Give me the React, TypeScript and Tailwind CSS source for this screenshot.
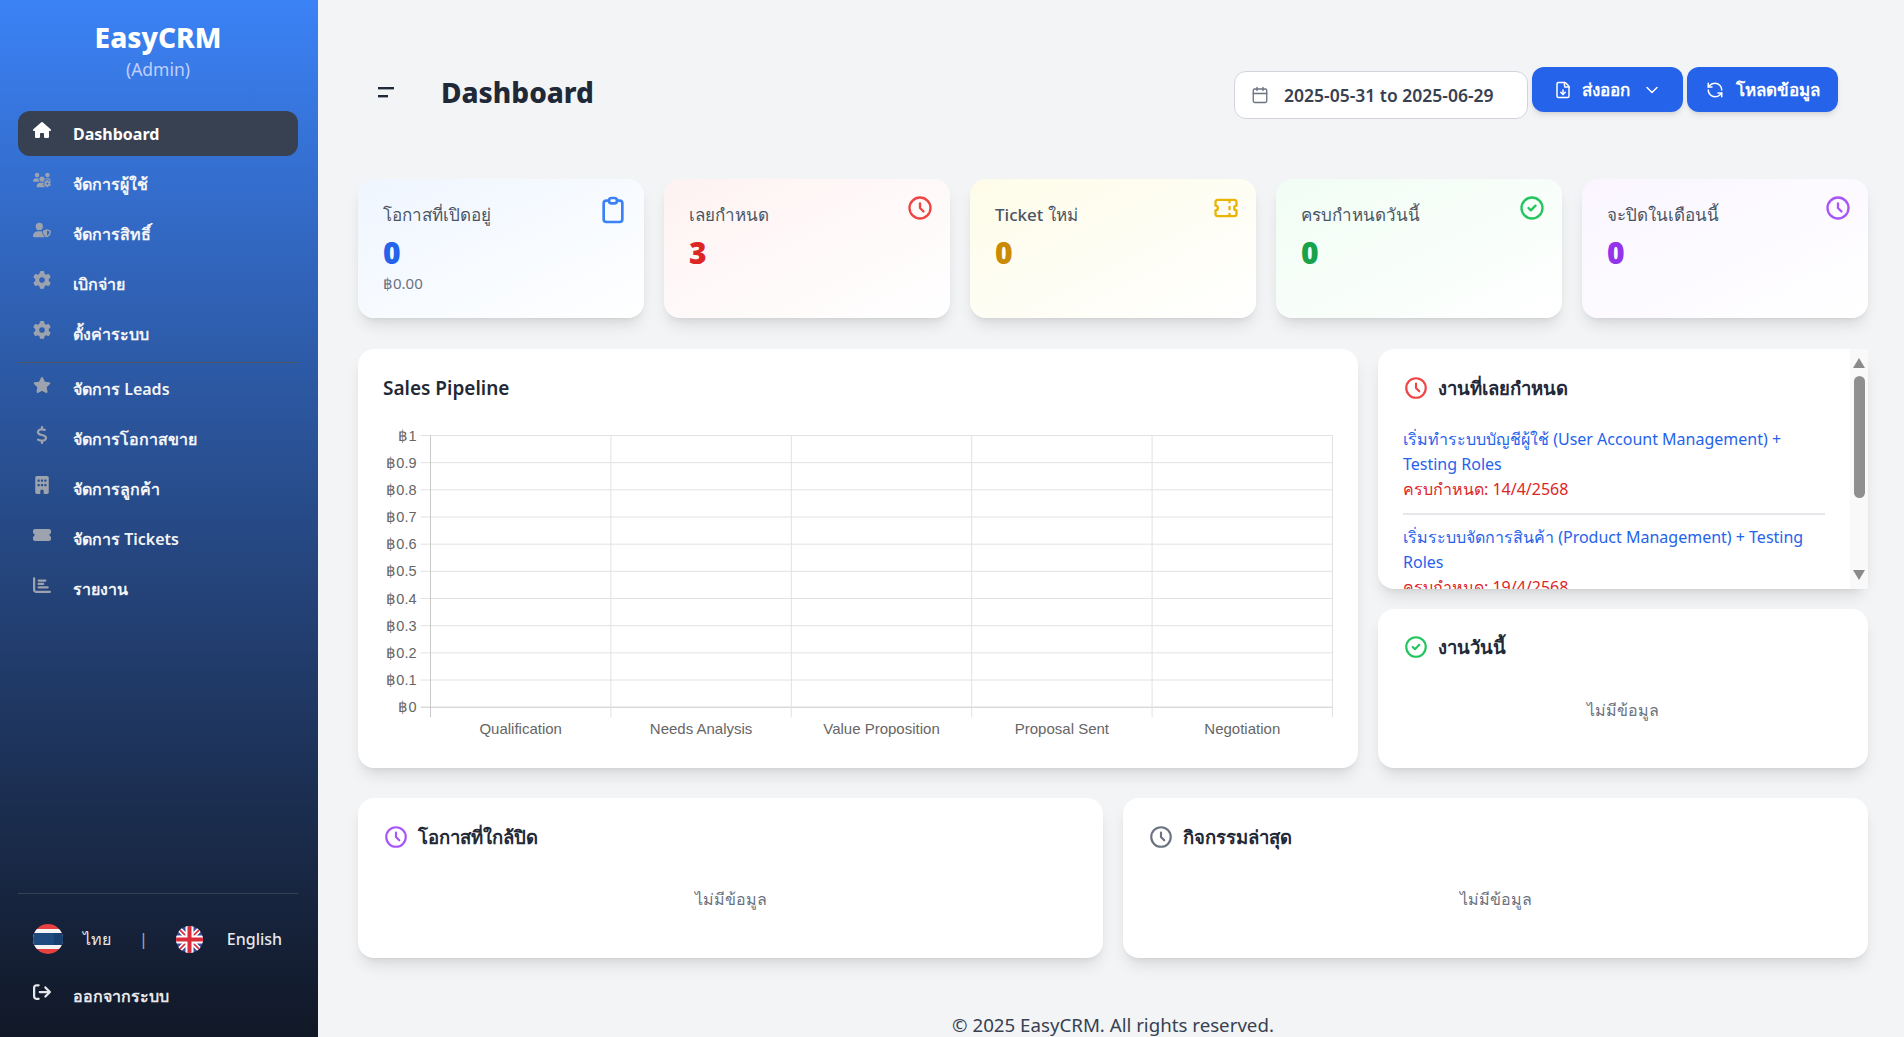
import React from "react";
import { FaHouse, FaUsersGear, FaUserShield, FaGear, FaStar, FaDollarSign, FaBuilding, FaTicketSimple, FaChartBar, FaArrowRightFromBracket } from "react-icons/fa6";
import { HiOutlineClipboard, HiOutlineClock, HiOutlineTicket, HiOutlineCheckCircle } from "react-icons/hi";
import { Calendar, FileDown, ChevronDown, RefreshCcw } from "lucide-react";

const topNav = [
  { label: "จัดการผู้ใช้", Icon: FaUsersGear },
  { label: "จัดการสิทธิ์", Icon: FaUserShield },
  { label: "เบิกจ่าย", Icon: FaGear },
  { label: "ตั้งค่าระบบ", Icon: FaGear },
];
const bottomNav = [
  { label: "จัดการ Leads", Icon: FaStar },
  { label: "จัดการโอกาสขาย", Icon: FaDollarSign },
  { label: "จัดการลูกค้า", Icon: FaBuilding },
  { label: "จัดการ Tickets", Icon: FaTicketSimple },
  { label: "รายงาน", Icon: FaChartBar },
];

function NavItem({ label, Icon }: { label: string; Icon: React.ComponentType<{ className?: string }> }) {
  return (
    <div className="flex h-[45px] items-center rounded-xl pl-[15px] text-base font-semibold text-[#f3f4f6]">
      <span className="w-10 shrink-0"><Icon className="mb-2 h-[18px] w-auto text-[#9ca3af]" /></span>
      <span>{label}</span>
    </div>
  );
}

function ThaiFlag() {
  return (
    <svg width="30" height="30" viewBox="0 0 30 30">
      <defs>
        <clipPath id="th"><circle cx="15" cy="15" r="15" /></clipPath>
      </defs>
      <g clipPath="url(#th)">
        <rect width="30" height="30" fill="#e8413f" />
        <rect y="5" width="30" height="20" fill="#f3f4f6" />
        <rect y="9" width="30" height="12" fill="#1e4a80" />
        <rect x="21" y="9" width="9" height="12" fill="#173f70" />
      </g>
    </svg>
  );
}

function UkFlag() {
  return (
    <svg width="27" height="27" viewBox="0 0 27 27" className="block">
      <defs>
        <clipPath id="uk"><circle cx="13.5" cy="13.5" r="13.5" /></clipPath>
      </defs>
      <g clipPath="url(#uk)">
        <rect width="27" height="27" fill="#3b4a94" />
        <path d="M0 0L27 27M27 0L0 27" stroke="#fff" strokeWidth="5" />
        <path d="M0 0L27 27M27 0L0 27" stroke="#d92b3a" strokeWidth="1.6" />
        <rect x="9.5" width="8" height="27" fill="#fff" />
        <rect y="9.5" width="27" height="8" fill="#fff" />
        <rect x="11.5" width="4" height="27" fill="#d92b3a" />
        <rect y="11.5" width="27" height="4" fill="#d92b3a" />
      </g>
    </svg>
  );
}

const stats = [
  { title: "โอกาสที่เปิดอยู่", value: "0", sub: "฿0.00", grad: "from-blue-50", val: "text-[#2563eb]", icon: <HiOutlineClipboard className="w-8 h-8 text-[#3b82f6]" />, iconPos: "right-[15px]" },
  { title: "เลยกำหนด", value: "3", grad: "from-red-50", val: "text-[#dc2626]", icon: <HiOutlineClock className="w-7 h-7 text-[#ef4444]" />, iconPos: "right-[16px]" },
  { title: "Ticket ใหม่", value: "0", grad: "from-yellow-50", val: "text-[#ca8a04]", icon: <HiOutlineTicket className="w-7 h-7 text-[#eab308]" />, iconPos: "right-[16px]" },
  { title: "ครบกำหนดวันนี้", value: "0", grad: "from-green-50", val: "text-[#16a34a]", icon: <HiOutlineCheckCircle className="w-7 h-7 text-[#22c55e]" />, iconPos: "right-[16px]" },
  { title: "จะปิดในเดือนนี้", value: "0", grad: "from-purple-50", val: "text-[#9333ea]", icon: <HiOutlineClock className="w-7 h-7 text-[#a855f7]" />, iconPos: "right-[16px]" },
];

function StatCard({ s }: { s: (typeof stats)[number] }) {
  return (
    <div className={`relative h-[139px] rounded-2xl bg-gradient-to-br ${s.grad} to-white px-[25px] pt-[22px] shadow-lg`}>
      <div className="text-[17px] leading-7 font-medium text-[#4b5563]">{s.title}</div>
      <div className={`mt-[6px] text-3xl leading-9 font-black ${s.val}`}>{s.value}</div>
      {s.sub && <div className="mt-[2px] text-[15px] leading-5 text-[#6b7280]">{s.sub}</div>}
      <div className={`absolute top-[15px] ${s.iconPos}`}>{s.icon}</div>
    </div>
  );
}

function SalesChart() {
  const ys = ["฿1", "฿0.9", "฿0.8", "฿0.7", "฿0.6", "฿0.5", "฿0.4", "฿0.3", "฿0.2", "฿0.1", "฿0"];
  const xs = ["Qualification", "Needs Analysis", "Value Proposition", "Proposal Sent", "Negotiation"];
  const left = 47.5;
  const top = 10.5;
  const stepX = 180.4;
  const stepY = 27.17;
  const bottom = top + stepY * 10;
  return (
    <svg width="956" height="320" className="block" style={{ fontFamily: "'Liberation Sans', Arial, sans-serif" }}>
      {ys.map((t, i) => (
        <g key={t}>
          <line x1={left - 10} x2={left + stepX * 5} y1={top + i * stepY} y2={top + i * stepY} stroke={i === 10 ? "#c9c9c9" : "#e2e2e2"} />
          <text x={left - 14} y={top + i * stepY + 5} textAnchor="end" fontSize="14.5" fill="#666">{t}</text>
        </g>
      ))}
      {[0, 1, 2, 3, 4, 5].map((i) => (
        <line key={i} x1={left + i * stepX} x2={left + i * stepX} y1={top} y2={bottom + 10} stroke={i === 0 ? "#c9c9c9" : "#e2e2e2"} />
      ))}
      {xs.map((t, i) => (
        <text key={t} x={left + stepX * (i + 0.5)} y={bottom + 27} textAnchor="middle" fontSize="15" fill="#666">{t}</text>
      ))}
    </svg>
  );
}

function CardHead({ icon, title }: { icon: React.ReactNode; title: string }) {
  return (
    <div className="flex items-center gap-[9px] text-[18.5px] leading-7 font-semibold text-[#1f2937]">
      {icon}
      <span>{title}</span>
    </div>
  );
}

function Empty({ mt }: { mt: string }) {
  return <div className={`${mt} text-center text-base leading-7 text-[#6b7280]`}>ไม่มีข้อมูล</div>;
}

export default function App() {
  return (
    <div className="flex h-[1037px] w-[1904px] overflow-hidden bg-[#f3f4f6] font-['Noto_Sans','Noto_Sans_CJK_SC',sans-serif]">
      <aside className="flex h-full w-[318px] shrink-0 flex-col bg-gradient-to-b from-[#3b82f6] to-[#111827] pr-5 pl-[18px]">
        <div className="pt-[19px] text-center">
          <div className="text-[28px] leading-9 font-extrabold text-white">EasyCRM</div>
          <div className="mt-[2px] text-[17.5px] leading-6 text-[#c0cffc]">(Admin)</div>
        </div>
        <nav className="mt-[30px] flex flex-col gap-[5px]">
          <div className="flex h-[45px] items-center rounded-xl bg-[#374151] pl-[15px] text-base font-bold text-white">
            <span className="w-10 shrink-0"><FaHouse className="mb-2 h-[18px] w-auto text-white" /></span>
            <span>Dashboard</span>
          </div>
          {topNav.map((n) => <NavItem key={n.label} {...n} />)}
        </nav>
        <div className="mt-[6px] mb-[3px] border-t border-[#4b5563]" />
        <nav className="flex flex-col gap-[5px]">
          {bottomNav.map((n) => <NavItem key={n.label} {...n} />)}
        </nav>
        <div className="mt-auto border-t border-[#374151]" />
        <div className="mt-[30px] flex items-center pl-[15px] text-base font-medium text-[#e5e7eb]">
          <ThaiFlag />
          <span className="ml-5">ไทย</span>
          <span className="ml-[28px] text-[#9ca3af]">|</span>
          <span className="ml-[28px]"><UkFlag /></span>
          <span className="ml-[24px]">English</span>
        </div>
        <div className="mt-[19px] mb-[19px] flex h-[45px] items-center pl-[15px] text-base font-semibold text-[#e5e7eb]">
          <span className="w-10 shrink-0"><FaArrowRightFromBracket className="mb-2 h-[18px] w-auto" /></span>
          <span>ออกจากระบบ</span>
        </div>
      </aside>

      <main className="min-w-0 flex-1 pt-[67px] pr-9 pl-10">
        <header className="flex h-[45px] items-start justify-between pr-[30px]">
          <div className="flex h-[50px] items-center pl-5">
            <svg width="18" height="12" viewBox="0 0 18 12" className="mt-[2px] text-[#1f2937]">
              <rect x="0" y="0" width="16" height="2.4" fill="currentColor" />
              <rect x="0" y="8" width="10" height="2.4" fill="currentColor" />
            </svg>
            <h1 className="ml-[45px] text-[28px] leading-9 font-extrabold text-[#1f2937]">Dashboard</h1>
          </div>
          <div className="flex items-start gap-[4px]">
            <div className="mt-[4px] flex h-[48px] w-[294px] items-center rounded-xl border border-[#d1d5db] bg-white pl-[16px] text-[17.5px] font-semibold text-[#374151]">
              <Calendar className="h-[18px] w-[18px] text-[#6b7280]" strokeWidth={1.75} />
              <span className="ml-[15px]">2025-05-31 to 2025-06-29</span>
            </div>
            <button className="flex h-[45px] w-[151px] items-center justify-center rounded-xl bg-[#2563eb] text-[17px] font-semibold text-white shadow-md">
              <FileDown className="h-[18px] w-[18px]" />
              <span className="ml-[10px]">ส่งออก</span>
              <ChevronDown className="ml-3 h-5 w-5" strokeWidth={1.75} />
            </button>
            <button className="flex h-[45px] w-[151px] items-center justify-center rounded-xl bg-[#2563eb] text-[17px] font-semibold text-white shadow-md">
              <RefreshCcw className="h-[18px] w-[18px]" />
              <span className="ml-[12px]">โหลดข้อมูล</span>
            </button>
          </div>
        </header>

        <section className="mt-[67px] grid grid-cols-5 gap-5">
          {stats.map((s) => <StatCard key={s.title} s={s} />)}
        </section>

        <section className="mt-[31px] grid grid-cols-3 gap-5">
          <div className="col-span-2 h-[419px] rounded-2xl bg-white px-[25px] pt-[25px] shadow-lg">
            <div className="text-[19px] leading-7 font-semibold text-[#1f2937]">Sales Pipeline</div>
            <div className="mt-[23px]"><SalesChart /></div>
          </div>
          <div className="flex flex-col gap-5">
            <div className="relative h-[240px] rounded-2xl bg-white shadow-lg">
              <div className="h-full overflow-hidden rounded-l-2xl pt-[25px] pr-[43px] pl-[25px]">
                <CardHead icon={<HiOutlineClock className="h-[26px] w-[26px] text-[#ef4444]" />} title="งานที่เลยกำหนด" />
                <div className="mt-[25px] border-b-2 border-[#e5e7eb] pb-[11px] text-base leading-[25px]">
                  <div className="text-[#2563eb]">เริ่มทำระบบบัญชีผู้ใช้ (User Account Management) + Testing Roles</div>
                  <div className="text-[#dc2626]">ครบกำหนด: 14/4/2568</div>
                </div>
                <div className="mt-[10px] text-base leading-[25px]">
                  <div className="text-[#2563eb]">เริ่มระบบจัดการสินค้า (Product Management) + Testing Roles</div>
                  <div className="text-[#dc2626]">ครบกำหนด: 19/4/2568</div>
                </div>
              </div>
              <div className="absolute top-0 right-0 bottom-0 flex w-[18px] flex-col items-center bg-[#f9f9f9]">
                <svg width="12" height="10" viewBox="0 0 12 10" className="mt-[9px]"><path d="M6 0L12 10H0Z" fill="#8a8a8a" /></svg>
                <div className="mt-[8px] h-[122px] w-[11px] rounded-full bg-[#8f8f8f]" />
                <div className="flex-1" />
                <svg width="12" height="10" viewBox="0 0 12 10" className="mb-[9px]"><path d="M0 0H12L6 10Z" fill="#8a8a8a" /></svg>
              </div>
            </div>
            <div className="h-[159px] rounded-2xl bg-white px-[25px] pt-[24px] shadow-lg">
              <CardHead icon={<HiOutlineCheckCircle className="h-[26px] w-[26px] text-[#22c55e]" />} title="งานวันนี้" />
              <Empty mt="mt-[35px]" />
            </div>
          </div>
        </section>

        <section className="mt-[30px] grid grid-cols-2 gap-5">
          <div className="h-[160px] rounded-2xl bg-white px-[25px] pt-[25px] shadow-lg">
            <CardHead icon={<HiOutlineClock className="h-[26px] w-[26px] text-[#a855f7]" />} title="โอกาสที่ใกล้ปิด" />
            <Empty mt="mt-[34px]" />
          </div>
          <div className="h-[160px] rounded-2xl bg-white px-[25px] pt-[25px] shadow-lg">
            <CardHead icon={<HiOutlineClock className="h-[26px] w-[26px] text-[#6b7280]" />} title="กิจกรรมล่าสุด" />
            <Empty mt="mt-[34px]" />
          </div>
        </section>

        <footer className="mt-[53px] text-center text-[18.7px] leading-7 text-[#374151]">© 2025 EasyCRM. All rights reserved.</footer>
      </main>
    </div>
  );
}
